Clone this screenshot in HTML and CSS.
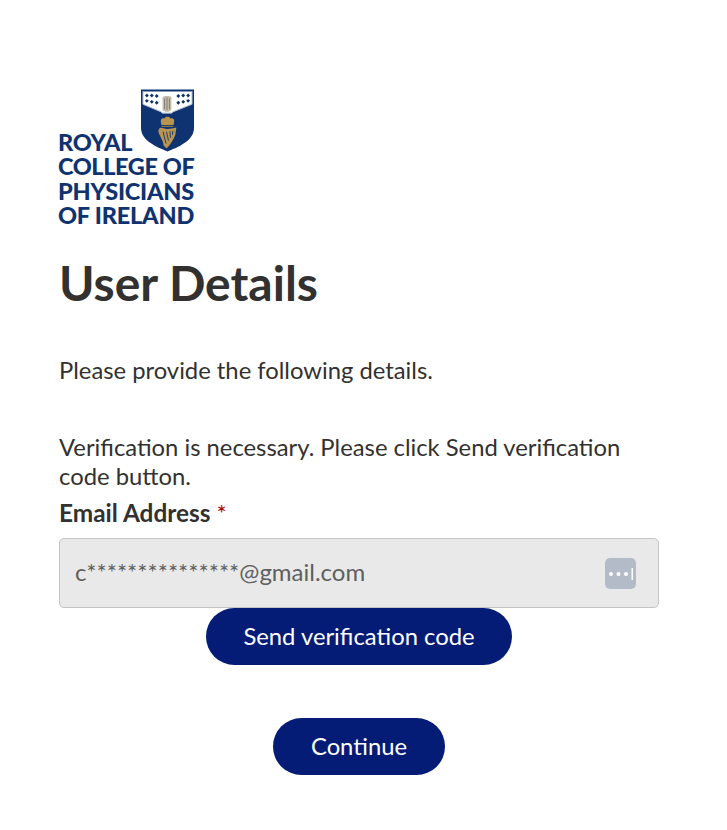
FILE: index.html
```html
<!DOCTYPE html>
<html lang="en">
<head>
<meta charset="utf-8">
<title>User Details</title>
<link rel="stylesheet" href="styles.css">
</head>
<body>
<main class="page">
  <div class="logo">
    <svg class="crest" width="55" height="65" viewBox="0 0 56 65" aria-hidden="true">
      <path d="M1 1H55V40C55 51 44 58 28 64C12 58 1 51 1 40Z" fill="#0f3370"/>
      <path d="M3 3H53V16L34 23.500L32 25H23L21 23.500L3 16Z" fill="#fff"/>
      <path d="M3 2.500V16L21 23.500L23 25H32L34 23.500L53 16V2.500" fill="none" stroke="#a9b5c9" stroke-width="1"/>
      <path d="M23 9C24 7 31 7 32 9V21C31 24.500 24 24.500 23 21Z" fill="#c4bba8"/>
      <path d="M25 10V21M27.500 9V22M30 10V21" stroke="#6f6f72" stroke-width="0.8" fill="none"/>
      <g fill="#12326a">
        <path d="M7 5l2 2-2 2-2-2zM12 5l2 2-2 2-2-2zM17 5.500l2 2-2 2-2-2z"/>
        <path d="M7 10.500l2 2-2 2-2-2zM12 11.500l2 2-2 2-2-2zM17 12.500l2 2-2 2-2-2z"/>
        <path d="M49 5l2 2-2 2-2-2zM44 5l2 2-2 2-2-2zM39 5.500l2 2-2 2-2-2z"/>
        <path d="M49 10.500l2 2-2 2-2-2zM44 11.500l2 2-2 2-2-2zM39 12.500l2 2-2 2-2-2z"/>
      </g>
      <path d="M22 37C20 32 22 29 25 30.500C25.500 28 30.500 28 31 30.500C34 29 36 32 34 37Z" fill="#b8944f"/>
      <path d="M22 38.500H34" stroke="#8a7440" stroke-width="1.200"/>
      <path d="M19 45C18 40 21 39 24 40.500C29 42 33 40 37 39.500L36 47C34 52 31 57 27 61L24 58C24 54 21 50 19 45Z" fill="#b8944f"/>
      <path d="M23.500 44L26.500 56M27 44L29 53M30.500 43.500L31 50M33.500 43L33 47" stroke="#0f3370" stroke-width="0.900" fill="none"/>
    </svg>
    <div class="wordmark">ROYAL<br><span class="tight">COLLEGE OF</span><br>PHYSICIANS<br>OF IRELAND</div>
  </div>
  <h1 class="title">User Details</h1>
  <p class="intro">Please provide the following details.</p>
  <p class="notice">Verification is necessary. Please click Send verification code button.</p>
  <label class="label" for="email">Email Address <span class="req">*</span></label>
  <div class="field">
    <span id="email" class="value">c***************@gmail.com</span>
    <svg class="keyicon" width="31" height="31" viewBox="0 0 31 31" aria-hidden="true">
      <rect width="31" height="31" rx="5" fill="#b4bbc8"/>
      <g fill="#fff"><circle cx="6" cy="16" r="2"/><circle cx="13.500" cy="16" r="2"/><circle cx="21" cy="16" r="2"/><rect x="26.500" y="10" width="1.500" height="12"/></g>
    </svg>
  </div>
  <div class="action first"><button class="btn wide" type="button">Send verification code</button></div>
  <div class="action second"><button class="btn" type="button">Continue</button></div>
</main>
</body>
</html>
```
FILE: styles.css
```css
* { box-sizing: border-box; }
html, body { margin: 0; background: #fff; }
body { font-family: Lato, "Liberation Sans", sans-serif; color: #323130; }
.page { width: 600px; margin-left: 59px; padding-top: 88px; }
.logo { position: relative; height: 139px; }
.crest { position: absolute; left: 81px; top: 0; }
.wordmark { padding-top: 42px; margin-left: -1px; font-weight: 900; font-size: 23.5px; line-height: 24.3px; letter-spacing: -0.2px; color: #0f3370; white-space: nowrap; }
.tight { letter-spacing: -0.4px; }
.title { margin: 24px 0 0; font-size: 48px; line-height: 64px; font-weight: 700; }
.intro { margin: 39px 0 0; font-size: 23.8px; line-height: 32px; }
.notice { margin: 47px 0 0; font-size: 23.8px; line-height: 29px; }
.label { display: block; margin-top: 6px; font-size: 24.4px; line-height: 32px; font-weight: 700; }
.req { color: #a80000; font-weight: 400; font-size: 24px; }
.field { display: flex; align-items: center; justify-content: space-between; height: 70px; margin-top: 9px; padding: 0 22px 0 15px; background: #e9e9e9; border: 1px solid #c4c4c4; border-radius: 5px; }
.value { margin-bottom: 3px; font-size: 24px; color: #5f5f5f; }
.action { display: flex; justify-content: center; }
.btn { height: 57px; padding: 0 37.5px 2px; border: 0; border-radius: 29px; background: #041c76; color: #fff; font: 400 23.8px Lato, "Liberation Sans", sans-serif; }
.second { margin-top: 53px; }
```
